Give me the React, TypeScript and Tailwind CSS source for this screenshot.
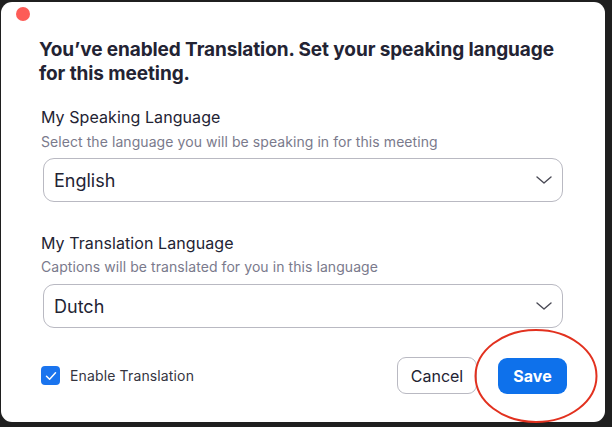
import React from "react";

function Chevron() {
  return (
    <svg width="16" height="8" viewBox="0 0 16 8" fill="none">
      <path d="M1 1 L8 7 L15 1" stroke="#4a4a55" strokeWidth="1.4" strokeLinecap="round" strokeLinejoin="round" />
    </svg>
  );
}

function Select({ value }: { value: string }) {
  return (
    <div className="ml-[42px] w-[520px] h-[44px] rounded-[11px] border border-[#b9b9c2] flex items-center justify-between pl-[10px] pr-[10px]">
      <span className="text-[18px] text-[#232333]">{value}</span>
      <Chevron />
    </div>
  );
}

export default function App() {
  return (
    <div
      className="w-[612px] h-[427px] bg-[#1f1f1f] pt-[2px] pl-[1px]"
      style={{ fontFamily: "Inter, 'Liberation Sans', sans-serif" }}
    >
      <div className="relative w-[604px] h-[420px] rounded-[11px] bg-white flex flex-col">
        <div className="pt-[5px] pl-[15px]">
          <div className="w-[14px] h-[14px] rounded-full bg-[#fd5c57]" />
        </div>
        <h1 className="mt-[17px] pl-[38px] text-[19px] leading-[24px] font-bold tracking-[-0.005em] text-[#232333]">
          You’ve enabled Translation. Set your speaking language
          <br />
          for this meeting.
        </h1>

        <div className="mt-[21px] pl-[40px] text-[16px] leading-[20px] tracking-[0.005em] text-[#232333]">My Speaking Language</div>
        <div className="mt-[6px] pl-[40px] text-[14px] leading-[18px] tracking-[0.005em] text-[#7a7a8c]">
          Select the language you will be speaking in for this meeting
        </div>
        <div className="mt-[7px]">
          <Select value="English" />
        </div>

        <div className="mt-[31px] pl-[40px] text-[16px] leading-[20px] tracking-[0.005em] text-[#232333]">My Translation Language</div>
        <div className="mt-[5px] pl-[40px] text-[14px] leading-[18px] tracking-[0.005em] text-[#7a7a8c]">
          Captions will be translated for you in this language
        </div>
        <div className="mt-[8px]">
          <Select value="Dutch" />
        </div>

        <div className="mt-[29px] flex items-center pl-[40px] pr-[38px]">
          <div className="w-[19px] h-[19px] rounded-[4px] bg-[#1a74ee] flex items-center justify-center">
            <svg width="12" height="10" viewBox="0 0 12 10" fill="none">
              <path d="M1.5 5.2 L4.6 8.2 L10.5 1.8" stroke="white" strokeWidth="1.5" strokeLinecap="round" strokeLinejoin="round" />
            </svg>
          </div>
          <span className="ml-[10px] text-[14px] tracking-[0.01em] text-[#35353f]">Enable Translation</span>
          <div className="ml-auto flex items-center gap-[21px]">
            <button className="w-[80px] h-[37px] rounded-[9px] border border-[#b9b9c2] bg-white text-[16px] text-[#232333]">
              Cancel
            </button>
            <button className="w-[69px] h-[36px] rounded-[9px] bg-[#0e71eb] text-[16px] font-bold text-white">
              Save
            </button>
          </div>
        </div>

        <svg className="absolute left-[472px] top-[326px]" width="126" height="96" viewBox="0 0 126 96" fill="none">
          <ellipse cx="63" cy="48" rx="60.5" ry="46" stroke="#e2311f" strokeWidth="2" />
        </svg>
      </div>
    </div>
  );
}
